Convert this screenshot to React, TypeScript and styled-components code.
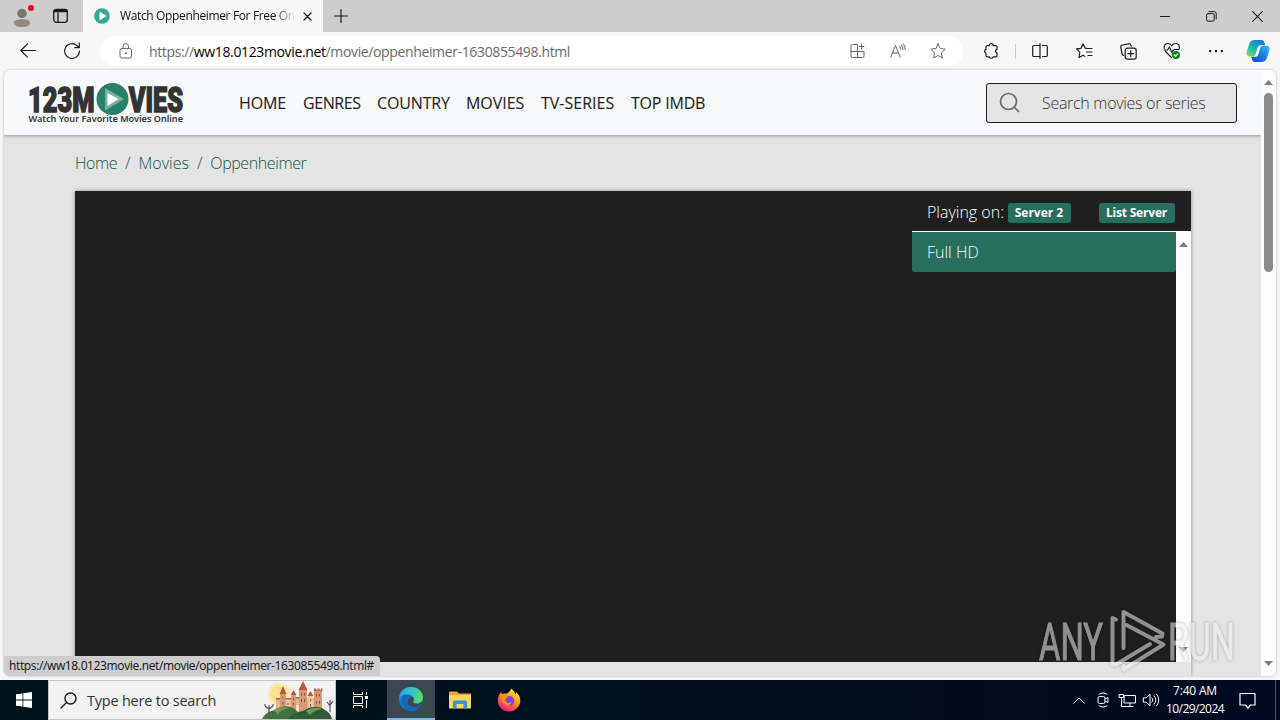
import styled, { createGlobalStyle, css } from 'styled-components';

const GlobalStyle = createGlobalStyle`
  * {
    box-sizing: border-box;
  }

  body {
    margin: 0;
    overflow: hidden;
    font-family: 'Open Sans', 'Noto Sans', sans-serif;
  }

  svg {
    display: block;
    flex: none;
    overflow: visible;
  }
`;

const Screen = styled.div`
  display: flex;
  flex-direction: column;
  width: 1280px;
  height: 720px;
  overflow: hidden;
  background: #f7f7f7;
`;

const Text = styled.span<{ $size?: number; $weight?: number; $spacing?: number; $color?: string }>`
  font-size: ${(props) => props.$size ?? 16}px;
  font-weight: ${(props) => props.$weight ?? 400};
  letter-spacing: ${(props) => props.$spacing ?? 0}px;
  color: ${(props) => props.$color ?? 'inherit'};
  line-height: 20px;
  white-space: nowrap;
`;

/* ---------- tab strip ---------- */

const TabStrip = styled.div`
  display: flex;
  height: 32px;
  background: #cdcdcd;
`;

const StripButton = styled.div<{ $width: number }>`
  display: flex;
  align-items: center;
  justify-content: center;
  width: ${(props) => props.$width}px;
  height: 32px;
`;

const Tab = styled.div`
  display: flex;
  align-items: center;
  width: 240px;
  padding: 0 7px 0 11px;
  background: #f7f7f7;
`;

const TabTitle = styled.div`
  display: flex;
  width: 175px;
  margin: 0 4px 0 10px;
  overflow: hidden;
  mask-image: linear-gradient(to right, #000 88%, transparent);
`;

const WindowControls = styled.div`
  display: flex;
  margin-left: auto;
`;

/* ---------- toolbar ---------- */

const Toolbar = styled.div`
  display: flex;
  align-items: center;
  height: 38px;
  padding-left: 6px;
`;

const ToolButton = styled.div<{ $width?: number }>`
  display: flex;
  align-items: center;
  justify-content: center;
  width: ${(props) => props.$width ?? 44}px;
  height: 30px;
`;

const AddressBar = styled.div`
  display: flex;
  align-items: center;
  width: 863px;
  height: 30px;
  margin: 0 6px;
  padding: 0 5px 0 6px;
  background: #fff;
  border-radius: 15px;
`;

const Url = styled.div`
  flex: 1;
  margin-left: 3px;
  color: #6b6b6b;

  b {
    font-weight: 400;
    color: #000;
  }
`;

const ToolDivider = styled.div`
  width: 1px;
  height: 15px;
  margin: 0 2px;
  background: #c9c9c9;
`;

/* ---------- page ---------- */

const Page = styled.div`
  position: relative;
  display: flex;
  width: 1272px;
  height: 606px;
  margin: 0 4px 4px;
  overflow: hidden;
  border-radius: 6px;
  background: #e4e4e4;
  box-shadow: 0 0 3px rgba(0, 0, 0, 0.25);
`;

const Content = styled.div`
  display: flex;
  flex-direction: column;
  width: 1257px;
`;

const SiteHeader = styled.header`
  display: flex;
  align-items: center;
  height: 65px;
  padding: 0 24px;
  background: #f7f9fb;
  box-shadow: 0 1px 3px rgba(0, 0, 0, 0.35);
`;

const Nav = styled.nav`
  display: flex;
  gap: 16px;
  margin: 1px 0 0 54px;
  color: #1f1f1f;
  -webkit-text-stroke: 0.1px #1f1f1f;
`;

const NavItem = styled.div<{ $width: number }>`
  display: flex;
  width: ${(props) => props.$width}px;
`;

const SearchBox = styled.div`
  display: flex;
  align-items: center;
  width: 251px;
  height: 40px;
  margin-left: auto;
  padding-left: 12px;
  gap: 22px;
  background: #e4e4e4;
  border: 1px solid #1f1f1f;
  border-radius: 3px;
`;

const Breadcrumb = styled.div`
  display: flex;
  height: 56px;
  padding: 18px 0 0 71px;
  gap: 8px;
  color: #12543f;
`;

const Player = styled.div`
  display: flex;
  width: 1116px;
  height: 485px;
  margin-left: 71px;
  padding-bottom: 14px;
  box-shadow: 0 0 4px rgba(0, 0, 0, 0.4);
`;

const Video = styled.div`
  width: 837px;
  background: #1f1f1f;
`;

const ServerPane = styled.div`
  display: flex;
  flex-direction: column;
  width: 279px;
  background: #1f1f1f;
`;

const PaneHeader = styled.div`
  display: flex;
  align-items: center;
  height: 41px;
  padding: 2px 16px 0 15px;
  border-bottom: 1px solid #fff;
  color: #fff;
`;

const Badge = styled.span<{ $width: number; $push?: boolean }>`
  display: flex;
  align-items: center;
  justify-content: center;
  width: ${(props) => props.$width}px;
  height: 20px;
  margin-top: 1px;
  padding-right: 1px;
  border-radius: 3px;
  background: #276e5d;
  ${(props) =>
    props.$push
      ? css`
          margin-left: auto;
        `
      : css`
          margin-left: 4px;
        `}
`;

const ServerList = styled.div`
  display: flex;
  flex: 1;
`;

const ServerItem = styled.div`
  display: flex;
  align-items: center;
  width: 264px;
  height: 40px;
  padding-left: 15px;
  border-radius: 0 0 3px 3px;
  background: #276e5d;
  color: #fff;
`;

const Scrollbar = styled.div`
  display: flex;
  flex-direction: column;
  align-items: center;
  justify-content: space-between;
  width: 15px;
  padding: 10px 0;
  background: #fcfcfc;
`;

const Thumb = styled.div`
  width: 9px;
  height: 179px;
  margin: 8px 0 auto;
  border-radius: 5px;
  background: #8b8b8b;
`;

const StatusBubble = styled.div`
  position: absolute;
  left: 0;
  bottom: 0;
  display: flex;
  align-items: center;
  width: 376px;
  height: 20px;
  padding-left: 5px;
  background: #cdcdcd;
  border-radius: 0 4px 0 0;
`;

const Watermark = styled.svg`
  position: absolute;
  left: 1032px;
  top: 536px;
  filter: drop-shadow(0 0 1.5px rgba(0, 0, 0, 0.5));
`;

/* ---------- taskbar ---------- */

const Taskbar = styled.div`
  display: flex;
  height: 40px;
  background: linear-gradient(to right, #00131c, #000f1c 50%, #000920);
  color: #fff;
`;

const TaskButton = styled.div<{ $width?: number; $active?: boolean }>`
  display: flex;
  align-items: center;
  justify-content: center;
  width: ${(props) => props.$width ?? 48}px;
  height: 40px;

  ${(props) =>
    props.$active &&
    css`
      margin-left: 3px;
      margin-right: 1px;
      background: #39494f;
      border-bottom: 2px solid #76b9ed;
    `}
`;

const TaskSearch = styled.div`
  display: flex;
  align-items: center;
  width: 288px;
  height: 40px;
  padding-left: 11px;
  gap: 10px;
  background: #f2f2f2;
  border: 1px solid #c4c4c4;
  color: #333;

  span {
    margin-top: 1px;
  }

  svg:last-child {
    margin-left: auto;
  }
`;

const Tray = styled.div`
  display: flex;
  margin-left: auto;
`;

const Clock = styled.div`
  display: flex;
  flex-direction: column;
  align-items: center;
  width: 64px;
  padding-top: 2px;

  span {
    line-height: 18px;
  }
`;

const ShowDesktop = styled.div`
  width: 5px;
  height: 40px;
  border-left: 1px solid #4b5364;
`;

const Line = styled.svg.attrs({ fill: 'none', stroke: 'currentColor' })<{ $color?: string }>`
  color: ${(props) => props.$color ?? '#1a1a1a'};
  stroke-linecap: round;
  stroke-linejoin: round;
`;

const Arrow = ({ down }: { down?: boolean }) => (
  <svg width="9" height="5" viewBox="0 0 9 5">
    <path d={down ? 'M0 0h9L4.500 5z' : 'M0 5h9L4.500 0z'} fill="#7f7f7f" />
  </svg>
);

const Favicon = () => (
  <svg width="16" height="16" viewBox="0 0 16 16">
    <circle cx="8" cy="8" r="7.800" fill="#34ab87" />
    <path d="M5.500 3.600v8.800L12.600 8z" fill="#fff" />
  </svg>
);

const Logo = () => (
  <svg width="157" height="44" viewBox="0 0 157 44" fontFamily="'Roboto', sans-serif">
    <g fill="#333" stroke="#333" strokeWidth="1.500" fontSize="35" fontWeight="900">
      <text x="0" y="30.800" textLength="66.500" lengthAdjust="spacingAndGlyphs">
        123M
      </text>
      <text x="100.800" y="30.800" textLength="54.200" lengthAdjust="spacingAndGlyphs">
        VIES
      </text>
    </g>
    <circle cx="84.500" cy="18" r="16" fill="#2a8065" />
    <path d="M77 7v22.500L96 18z" fill="#79b09f" />
    <path d="M79.500 12v13L90.500 18z" fill="#fff" />
    <text
      x="0.500"
      y="41"
      fill="#333"
      fontFamily="'Noto Sans', sans-serif"
      fontSize="9.200"
      fontWeight="600"
      textLength="154.500"
      lengthAdjust="spacingAndGlyphs"
    >
      Watch Your Favorite Movies Online
    </text>
  </svg>
);

const Copilot = () => (
  <svg width="24" height="24" viewBox="0 0 24 24">
    <defs>
      <linearGradient id="cpA" x1="0" y1="1" x2="0.700" y2="0">
        <stop offset="0" stopColor="#8fe05a" />
        <stop offset="0.500" stopColor="#1fb5b5" />
        <stop offset="1" stopColor="#1479d8" />
      </linearGradient>
      <linearGradient id="cpB" x1="0" y1="1" x2="1" y2="0">
        <stop offset="0" stopColor="#1746c8" />
        <stop offset="0.500" stopColor="#1a7ae0" />
        <stop offset="1" stopColor="#3cc0f5" />
      </linearGradient>
    </defs>
    <path
      d="M9 1h6.500c1.600 0 2.300.9 2.800 2.400l.9 2.800h-4.700c-1.700 0-2.400 1-2.900 2.600L9.600 15c-.5 1.500-1.300 2.400-3 2.400H3.700c-2.800 0-3.800-2-3-4.700L3.500 4.300C4.400 2 6.200 1 9 1z"
      fill="url(#cpA)"
    />
    <path
      d="M15 23H9c-1.700 0-2.500-.9-3-2.500l-.8-2.700h4c1.700 0 2.700-1 3.200-2.600L14.300 9c.5-1.500 1.400-2.300 3-2.300h3c2.800 0 3.900 1.900 3.100 4.600l-2.800 8.400C19.800 22 17.800 23 15 23z"
      fill="url(#cpB)"
    />
  </svg>
);

const EdgeLogo = () => (
  <svg width="24" height="24" viewBox="0 0 24 24">
    <defs>
      <linearGradient id="edA" x1="0" y1="0.300" x2="1" y2="0.500">
        <stop offset="0" stopColor="#2aa8e0" />
        <stop offset="0.500" stopColor="#33c3c9" />
        <stop offset="1" stopColor="#63d95a" />
      </linearGradient>
      <linearGradient id="edB" x1="0" y1="0" x2="1" y2="1">
        <stop offset="0" stopColor="#1f9ae0" />
        <stop offset="1" stopColor="#0f4fa8" />
      </linearGradient>
    </defs>
    <circle cx="12" cy="12" r="12" fill="url(#edB)" />
    <path
      d="M.3 10C1.300 4.200 6 0 12 0c7 0 12 5 12 10.500 0 3.600-2.600 6-6 6-2.500 0-4-1-4-2 0-.7.800-1 .8-2.500C14.800 9.500 12 7.300 8.500 7.300 4.800 7.300 1.800 8.500.3 10z"
      fill="url(#edA)"
    />
    <path
      d="M8.500 15.500c0-3 2-5 4.300-5.500 1.300.8 2 1.700 2 3 0 1-.8 1.300-.8 2 0 1 1.500 2 4 2 1.800 0 3.600-.6 4.700-1.500C21.300 18 18.800 20 15.500 20c-4 0-7-1.800-7-4.500z"
      fill="#39494f"
    />
    <path
      d="M3 9.500C1 14 4 23 12 24c3.500.2 7-1.500 9-4-8 3-13-1-12.500-5.500C8.700 11.500 11 10 12 9.800 9 7 5 7.500 3 9.500z"
      fill="#1767bd"
    />
  </svg>
);

const Explorer = () => (
  <svg width="22" height="20" viewBox="0 0 22 20">
    <path d="M0 1.500h8l2 2h12V18H0z" fill="#e8a821" />
    <path d="M0 5h22v13.500H0z" fill="#fcd462" />
    <path
      d="M4 18.500V12c0-1 .6-1.600 1.600-1.600h10.800c1 0 1.600.6 1.600 1.600v6.500h-3.600V14H7.600v4.500z"
      fill="#3a94d8"
    />
  </svg>
);

const Firefox = () => (
  <svg width="24" height="24" viewBox="0 0 24 24">
    <defs>
      <linearGradient id="ffA" x1="0.800" y1="0" x2="0.250" y2="1">
        <stop offset="0" stopColor="#fff04a" />
        <stop offset="0.450" stopColor="#ff980e" />
        <stop offset="0.750" stopColor="#ff4058" />
        <stop offset="1" stopColor="#e31587" />
      </linearGradient>
    </defs>
    <path
      d="M14 .5c3 2 4 4 4.300 6 .7-.4.700-1.500.5-2.500 3.200 2.300 4.500 5.500 4.500 8.500 0 6-5 11-11.300 11S.8 18.600.8 12.700C.8 9 2.300 6 4.300 4c0 1 .2 1.700.7 2.300C6 5.500 7.600 5.300 9 5.800c1.500-.7 4.500-2 5-5.300z"
      fill="url(#ffA)"
    />
    <circle cx="12.300" cy="13" r="5" fill="#7543e5" />
    <path
      d="M4.600 8c2-.8 3.800-.5 5 .6 1.300-.3 2 0 2.600.4-2 .2-2.400 1.300-3.200 2-.8.500-1 2.500 1 3.600 1.500.7 3.500.3 4.500-.8C14.500 17 11.500 18.500 9 17.500 5.500 16 4.200 12 4.600 8z"
      fill="#ff8a1e"
    />
  </svg>
);

const Castle = () => (
  <svg width="73" height="38" viewBox="0 0 73 38">
    <circle cx="17" cy="13" r="11.500" fill="#fae9b4" />
    <circle cx="17" cy="13" r="8.500" fill="#fde08c" />
    <path d="M14 17h46v14H14z" fill="#e3b193" />
    <path d="M18 13h6v18h-6zM37 9h8v22h-8zM52 10h8v21h-8zM29 14h5v16h-5z" fill="#d69a78" />
    <path d="M24 18h4v12h-4zM46 15h5v15h-5z" fill="#ecc6a8" />
    <path d="M21 5l3.500 8h-7zM41 0l4.500 9h-9zM31.500 9l3 5h-6zM48.500 10l3 5h-6z" fill="#b8593a" />
    <path
      d="M52 10V7.500h2V9h1.500V7.500h2V9H59V7.500h1.500V10zM24 17h5v1.500h-5zM34 16h3v1.500h-3zM14 17h4v1.500h-4z"
      fill="#ad5f43"
    />
    <path
      d="M21 15.500v2M21 21v2.500M31.500 17v2M31.500 22v2M39.500 12v2.500M42.500 12v2.500M39.500 18v3M42.500 18v3M48.500 18v2.500M48.500 23v2.500M54.500 13v2.500M57.500 13v2.500M54.500 20v2.500M57.500 20v2.500M26 22v2"
      stroke="#8a4c38"
      strokeWidth="1"
    />
    <path d="M34 24h3v6h-3zM50 25h2v5h-2z" fill="#f7e0c6" />
    <path d="M0 38c3-6 8-8 13-9 5-4 12-5 18-2 4 2 6 6 7 11z" fill="#41733f" />
    <path d="M26 38c4-5 9-7 15-8 7-5 16-6 22-1 4 2 6 5 7 9z" fill="#2e5c3a" />
    <path d="M12 29c5-3 10-4 15-2-5 1-9 3-11 7zM44 30c6-4 12-4 16-2-6 1-10 3-12 6z" fill="#6f9b4c" />
    <path
      d="M7 34V24M7 28l-4-3M7 28l4-3M68 31V19M68 25l-3-4M68 24l3-4M3 25v-2M11 25v-2"
      stroke="#4a4560"
      strokeWidth="1.100"
      fill="none"
    />
  </svg>
);

const menu: { label: string; width: number; spacing: number }[] = [
  { label: 'HOME', width: 48, spacing: -0.1 },
  { label: 'GENRES', width: 58, spacing: -0.4 },
  { label: 'COUNTRY', width: 73, spacing: -0.15 },
  { label: 'MOVIES', width: 59, spacing: -0.05 },
  { label: 'TV-SERIES', width: 74, spacing: 0 },
  { label: 'TOP IMDB', width: 75, spacing: -0.2 },
];

const App = () => (
  <Screen>
    <GlobalStyle />
    <TabStrip>
      <StripButton $width={44}>
        <svg width="24" height="24" viewBox="0 0 24 24">
          <circle cx="12" cy="9.500" r="4.700" fill="#7b746f" />
          <path d="M4 19c0-3 3.500-3.700 8-3.700s8 .7 8 3.700c0 2.500-3.500 4-8 4s-8-1.500-8-4z" fill="#8f8883" />
          <circle cx="21" cy="4" r="3" fill="#e00b1c" />
        </svg>
      </StripButton>
      <StripButton $width={33}>
        <Line width="16" height="16" viewBox="0 0 16 16" strokeWidth="1.300">
          <rect x="0.800" y="1.300" width="13.500" height="13" rx="2.500" />
          <path d="M1.500 3h12" strokeWidth="2.400" />
          <path d="M5 5v9" />
        </Line>
      </StripButton>
      <StripButton $width={6} />
      <Tab>
        <Favicon />
        <TabTitle>
          <Text $size={12} $spacing={-0.36} $color="#111">
            Watch Oppenheimer For Free On
          </Text>
        </TabTitle>
        <StripButton $width={17}>
          <Line width="9" height="9" viewBox="0 0 9 9" strokeWidth="1.300">
            <path d="M1 1l7 7M8 1L1 8" />
          </Line>
        </StripButton>
      </Tab>
      <StripButton $width={35}>
        <Line width="14" height="14" viewBox="0 0 14 14" strokeWidth="1.200">
          <path d="M.5 7h13M7 .5v13" />
        </Line>
      </StripButton>
      <WindowControls>
        <StripButton $width={46}>
          <Line width="10" height="10" viewBox="0 0 10 10" shapeRendering="crispEdges">
            <path d="M0 5.500h10" />
          </Line>
        </StripButton>
        <StripButton $width={46}>
          <Line width="11" height="11" viewBox="0 0 11 11">
            <rect x="0.600" y="2.600" width="7.600" height="7.600" rx="1.500" />
            <path d="M3 .6h5.200a2 2 0 0 1 2 2V8" />
          </Line>
        </StripButton>
        <StripButton $width={46}>
          <Line width="11" height="11" viewBox="0 0 11 11" strokeWidth="1.100">
            <path d="M.7.7l9.600 9.600M10.300.7L.7 10.300" />
          </Line>
        </StripButton>
      </WindowControls>
    </TabStrip>

    <Toolbar>
      <ToolButton>
        <Line width="16" height="16" viewBox="0 0 16 16" strokeWidth="1.200">
          <path d="M15.500 7.500H.8M7.500.8L.8 7.500l6.700 6.700" />
        </Line>
      </ToolButton>
      <ToolButton>
        <Line width="18" height="18" viewBox="0 0 18 18" strokeWidth="1.200">
          <path d="M16.400 9A7.400 7.400 0 1 1 14 3.600L16 5.500M16.300 1.200v4.500h-4.500" />
        </Line>
      </ToolButton>
      <AddressBar>
        <ToolButton $width={40}>
          <Line width="14" height="16" viewBox="0 0 14 16" $color="#666">
            <rect x="1" y="5.500" width="11.500" height="9.500" rx="1.800" />
            <path d="M4 5.500V3.300a2.700 2.700 0 0 1 5.500 0v2.200" />
            <circle cx="6.800" cy="10.200" r="0.600" fill="currentColor" />
          </Line>
        </ToolButton>
        <Url>
          <Text $size={14} $spacing={-0.365}>
            https://<b>ww18.0123movie.net</b>/movie/oppenheimer-1630855498.html
          </Text>
        </Url>
        <ToolButton $width={40}>
          <Line width="16" height="16" viewBox="0 0 16 16" $color="#666">
            <path d="M7 1.500H2.500a1.500 1.500 0 0 0-1.500 1.500v10A1.500 1.500 0 0 0 2.500 14.500h10a1.500 1.500 0 0 0 1.500-1.500V8.500H1M7.500 1.500v13M11.500 1v5M9 3.500h5" />
          </Line>
        </ToolButton>
        <ToolButton $width={40}>
          <Line width="16" height="16" viewBox="0 0 16 16" $color="#666">
            <path d="M.8 14L5.500 2.500 10.200 14M2.500 10h6M9.800 3.500a3 3 0 0 1 .7 2.700M11.600 2a5.500 5.500 0 0 1 1.300 4.700M13.400.8a8 8 0 0 1 1.800 6" />
          </Line>
        </ToolButton>
        <ToolButton $width={40}>
          <Line width="16" height="16" viewBox="0 0 16 16" $color="#666">
            <path d="M8 .8l2.200 4.700 5 .7-3.700 3.500.9 5.200L8 12.500l-4.400 2.400.9-5.200L.8 6.200l5-.7z" />
          </Line>
        </ToolButton>
      </AddressBar>
      <ToolButton>
        <Line width="16" height="16" viewBox="0 0 16 16" strokeWidth="1.200">
          <path d="M6.200 2.700a2 2 0 0 1 4 0h2.600a1.200 1.200 0 0 1 1.200 1.200v2.400a1.900 1.900 0 0 0 0 3.700v2.600a1.200 1.200 0 0 1-1.200 1.200h-2.700a1.900 1.900 0 0 1-3.700 0H4.200A1.200 1.200 0 0 1 3 12.600V10a1.900 1.900 0 0 1 0-3.700V3.900a1.200 1.200 0 0 1 1.200-1.200z" />
        </Line>
      </ToolButton>
      <ToolDivider />
      <ToolButton>
        <Line width="16" height="16" viewBox="0 0 16 16" strokeWidth="1.200">
          <path d="M8 2.500H2A1.300 1.300 0 0 0 .7 3.800v8.400A1.300 1.300 0 0 0 2 13.500h6M10.500 2.500H14a1.300 1.300 0 0 1 1.300 1.300v8.400a1.300 1.300 0 0 1-1.300 1.300h-3.500M8 .7v14.600" />
        </Line>
      </ToolButton>
      <ToolButton>
        <Line width="17" height="16" viewBox="0 0 17 16" strokeWidth="1.200">
          <path d="M10.500 5.300L9.200 5.200 7 .8 5 5.300l-4.500.6 3.300 3.300-.9 5.300 4.200-2.200 1.600.9M10.500 5.500H16M10.500 9H16M12 12.500h4" />
        </Line>
      </ToolButton>
      <ToolButton>
        <Line width="17" height="17" viewBox="0 0 17 17" strokeWidth="1.200">
          <rect x="5.200" y="5.200" width="11" height="11" rx="2.200" />
          <path d="M10.700 7.800v5.800M7.800 10.700h5.800M3.500 12.300A2 2 0 0 1 2 10.600L.8 4.300A2 2 0 0 1 2.400 2L8.700.8A2 2 0 0 1 11 2.400l.2.800" />
        </Line>
      </ToolButton>
      <ToolButton>
        <Line width="18" height="18" viewBox="0 0 18 18" strokeWidth="1.200">
          <path d="M1.300 6.500C.5 3.500 2.500 1.500 4.800 1.500 6.500 1.500 8 2.500 8.700 3.700c.7-1.200 2.200-2.200 4-2.200 2.500 0 4.200 2.200 3.600 4.800M2.500 9.500l6 6M1 8h3.500l2-3 2.300 5.200L11 7.500h5" />
          <circle cx="13" cy="13" r="4" fill="#137f1a" stroke="none" />
          <path d="M11.200 13l1.300 1.300 2.300-2.500" stroke="#fff" />
        </Line>
      </ToolButton>
      <ToolButton>
        <svg width="16" height="4" viewBox="0 0 16 4" fill="#1a1a1a">
          <circle cx="2.200" cy="2" r="1.200" />
          <circle cx="8" cy="2" r="1.200" />
          <circle cx="13.800" cy="2" r="1.200" />
        </svg>
      </ToolButton>
      <ToolButton $width={40}>
        <Copilot />
      </ToolButton>
    </Toolbar>

    <Page>
      <Content>
        <SiteHeader>
          <Logo />
          <Nav>
            {menu.map(({ label, width, spacing }) => (
              <NavItem key={label} $width={width}>
                <Text $spacing={spacing}>{label}</Text>
              </NavItem>
            ))}
          </Nav>
          <SearchBox>
            <Line width="21" height="21" viewBox="0 0 21 21" strokeWidth="1.700" $color="#6a6a6a">
              <circle cx="9.500" cy="9.500" r="8" />
              <path d="M15.500 15.500l4 4" />
            </Line>
            <Text $weight={300} $spacing={-0.3} $color="#333">
              Search movies or series
            </Text>
          </SearchBox>
        </SiteHeader>
        <Breadcrumb>
          <Text $weight={300} $spacing={-0.45}>
            Home
          </Text>
          <Text $weight={300}>/</Text>
          <Text $weight={300}>Movies</Text>
          <Text $weight={300}>/</Text>
          <Text $weight={300} $spacing={-0.41}>
            Oppenheimer
          </Text>
        </Breadcrumb>
        <Player>
          <Video />
          <ServerPane>
            <PaneHeader>
              <Text $weight={300}>Playing on:</Text>
              <Badge $width={63}>
                <Text $size={12} $weight={700}>
                  Server 2
                </Text>
              </Badge>
              <Badge $width={76} $push>
                <Text $size={12} $weight={700} $spacing={-0.2}>
                  List Server
                </Text>
              </Badge>
            </PaneHeader>
            <ServerList>
              <ServerItem>
                <Text $weight={300}>Full HD</Text>
              </ServerItem>
              <Scrollbar>
                <Arrow />
                <Arrow down />
              </Scrollbar>
            </ServerList>
          </ServerPane>
        </Player>
      </Content>
      <Scrollbar>
        <Arrow />
        <Thumb />
        <Arrow down />
      </Scrollbar>
      <StatusBubble>
        <Text $size={12} $spacing={-0.367} $color="#111">
          https://ww18.0123movie.net/movie/oppenheimer-1630855498.html#
        </Text>
      </StatusBubble>
      <Watermark width="200" height="70" viewBox="0 0 200 70" opacity="0.550">
        <g
          fill="#eee"
          stroke="#eee"
          strokeWidth="1"
          fontFamily="'Roboto', sans-serif"
          fontSize="51"
        >
          <text x="3" y="53.500" textLength="64" lengthAdjust="spacingAndGlyphs">
            ANY
          </text>
          <text x="132" y="53.500" textLength="67" lengthAdjust="spacingAndGlyphs">
            RUN
          </text>
        </g>
        <path
          d="M80 13.500L76.500 12v46.500H80L114 38M87.500 42V6l39 21.500-.5 3-6 .5M90.500 19l37 19.500-40 25V60"
          fill="none"
          stroke="#eee"
          strokeWidth="4"
          strokeLinejoin="round"
          strokeLinecap="round"
        />
      </Watermark>
    </Page>

    <Taskbar>
      <TaskButton>
        <svg width="16" height="16" viewBox="0 0 16 16" fill="#fff">
          <path d="M0 2.300L6.500 1.400v6.200H0zM7.300 1.300L16 0v7.600H7.300zM0 8.400h6.500v6.200L0 13.700zM7.300 8.400H16V16l-8.700-1.300z" />
        </svg>
      </TaskButton>
      <TaskSearch>
        <Line width="17" height="17" viewBox="0 0 17 17" strokeWidth="1.400">
          <circle cx="10.500" cy="6.500" r="5.500" />
          <path d="M6.500 10.500L1 16" />
        </Line>
        <Text $size={14.5} $spacing={-0.22}>
          Type here to search
        </Text>
        <Castle />
      </TaskSearch>
      <TaskButton>
        <svg width="17" height="16" viewBox="0 0 17 16" fill="none" stroke="#fff">
          <path d="M1.500 0v2.500h9V0M1.500 16v-2.500h9V16M1.500 4.500h9v7h-9zM14.500 0v3M14.500 8v8" />
          <path d="M14.500 4v3" strokeWidth="3" />
        </svg>
      </TaskButton>
      <TaskButton $active>
        <EdgeLogo />
      </TaskButton>
      <TaskButton>
        <Explorer />
      </TaskButton>
      <TaskButton $width={50}>
        <Firefox />
      </TaskButton>
      <Tray>
        <TaskButton $width={24}>
          <Line width="12" height="7" viewBox="0 0 12 7" $color="#fff">
            <path d="M.7 6.300L6 1l5.300 5.300" />
          </Line>
        </TaskButton>
        <TaskButton $width={24}>
          <Line width="12" height="16" viewBox="0 0 12 16" $color="#fff">
            <rect x="1" y="4.500" width="7" height="7" rx="1.500" />
            <path d="M8 7l3-1.500v5L8 9M2 2.200C4 .5 8 .5 10 2.200M2 13.800c2 1.700 6 1.700 8 0" />
          </Line>
        </TaskButton>
        <TaskButton $width={24}>
          <Line width="17" height="15" viewBox="0 0 17 15" $color="#fff">
            <path d="M5.500 2.500h11v7.500h-11zM11 10v3.500M6.500 13.500H14M.5 1.500h4v3h-4zM2.500 4.500v9H6" />
          </Line>
        </TaskButton>
        <TaskButton $width={24}>
          <Line width="17" height="14" viewBox="0 0 17 14" $color="#fff">
            <path d="M.7 4.800h2.500L7 1.200v11.600L3.200 9.200H.7zM9 4.800a3.200 3.200 0 0 1 0 4.400M11.300 3a5.800 5.800 0 0 1 0 8M13.600 1.200a8.500 8.500 0 0 1 0 11.600" />
          </Line>
        </TaskButton>
        <Clock>
          <Text $size={12} $spacing={-0.18}>
            7:40 AM
          </Text>
          <Text $size={12} $spacing={-0.57}>
            10/29/2024
          </Text>
        </Clock>
        <TaskButton $width={40}>
          <Line width="17" height="17" viewBox="0 0 17 17" $color="#fff" strokeWidth="1.200">
            <path d="M1 1.500h15v11.500h-4.500l-2.500 3-2.500-3H1z" />
          </Line>
        </TaskButton>
        <TaskButton $width={8} />
        <ShowDesktop />
      </Tray>
    </Taskbar>
  </Screen>
);

export default App;
